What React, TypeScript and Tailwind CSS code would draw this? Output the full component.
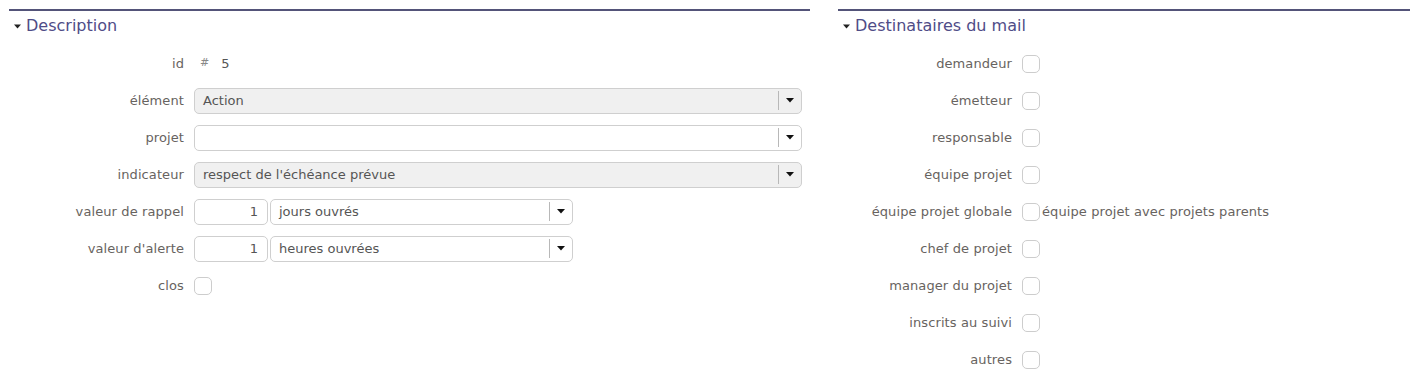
import React from "react";

const Arrow = () => (
  <svg width="8" height="5" viewBox="0 0 8 5" className="block">
    <path d="M0 0 H8 L4 4.5 Z" fill="#111" />
  </svg>
);

const Tri = () => (
  <svg width="7" height="5" viewBox="0 0 7 5" className="block">
    <path d="M0 0.5 H7 L3.5 4.5 Z" fill="#222" />
  </svg>
);

function Select({ value, disabled, width }: { value: string; disabled?: boolean; width: string }) {
  return (
    <div
      className={`${width} h-[26px] rounded-[5px] border border-[#cfcfcf] flex items-center ${disabled ? "bg-[#f0f0f0]" : "bg-white"}`}
    >
      <div className="flex-1 pl-[8px] text-[13px] text-[#555] truncate">{value}</div>
      <div className="w-px h-[19px] bg-[#b8b8b8]" />
      <div className="w-[22px] flex justify-center">
        <Arrow />
      </div>
    </div>
  );
}

function Check() {
  return <div className="w-[18px] h-[18px] rounded-[5px] border border-[#cdcdcd] bg-white shrink-0" />;
}

function Header({ title }: { title: string }) {
  return (
    <div className="border-t-2 border-[#535479]">
      <div className="flex items-center h-[20px] mt-[5px] mb-[9px] pl-[5px]">
        <Tri />
        <span className="ml-[5px] text-[16px] leading-[20px] text-[#4f4c87]">{title}</span>
      </div>
    </div>
  );
}

function Row({ label, labelW, children }: { label: string; labelW: string; children?: React.ReactNode }) {
  return (
    <div className="h-[37px] flex items-center">
      <div className={`${labelW} text-right text-[13px] text-[#676360] tracking-[0.1px] shrink-0`}>{label}</div>
      <div className="ml-[10px] flex items-center">{children}</div>
    </div>
  );
}

export default function App() {
  const dest = [
    "demandeur",
    "émetteur",
    "responsable",
    "équipe projet",
    "équipe projet globale",
    "chef de projet",
    "manager du projet",
    "inscrits au suivi",
    "autres",
  ];
  return (
    <div
      className="w-[1417px] h-[385px] bg-white pt-[9px] pl-[9px] flex overflow-hidden"
      style={{ fontFamily: '"DejaVu Sans", Verdana, sans-serif' }}
    >
      <div className="w-[801px] shrink-0">
        <Header title="Description" />
        <Row label="id" labelW="w-[175px]">
          <span className="text-[11px] text-[#888] ml-[6px]">#</span>
          <span className="text-[13px] text-[#555] ml-[12px]">5</span>
        </Row>
        <Row label="élément" labelW="w-[175px]">
          <Select value="Action" disabled width="w-[608px]" />
        </Row>
        <Row label="projet" labelW="w-[175px]">
          <Select value="" width="w-[608px]" />
        </Row>
        <Row label="indicateur" labelW="w-[175px]">
          <Select value="respect de l'échéance prévue" disabled width="w-[608px]" />
        </Row>
        <Row label="valeur de rappel" labelW="w-[175px]">
          <div className="w-[74px] h-[26px] rounded-[5px] border border-[#cfcfcf] bg-white flex items-center justify-end pr-[9px] text-[13px] text-[#555]">
            1
          </div>
          <div className="ml-[2px]">
            <Select value="jours ouvrés" width="w-[303px]" />
          </div>
        </Row>
        <Row label="valeur d'alerte" labelW="w-[175px]">
          <div className="w-[74px] h-[26px] rounded-[5px] border border-[#cfcfcf] bg-white flex items-center justify-end pr-[9px] text-[13px] text-[#555]">
            1
          </div>
          <div className="ml-[2px]">
            <Select value="heures ouvrées" width="w-[303px]" />
          </div>
        </Row>
        <Row label="clos" labelW="w-[175px]">
          <Check />
        </Row>
      </div>
      <div className="ml-[28px] flex-1 mr-[7px]">
        <Header title="Destinataires du mail" />
        {dest.map((d) => (
          <Row key={d} label={d} labelW="w-[174px]">
            <Check />
            {d === "équipe projet globale" && (
              <span className="ml-[2px] text-[13px] text-[#676360] tracking-[0.1px]">équipe projet avec projets parents</span>
            )}
          </Row>
        ))}
      </div>
    </div>
  );
}
